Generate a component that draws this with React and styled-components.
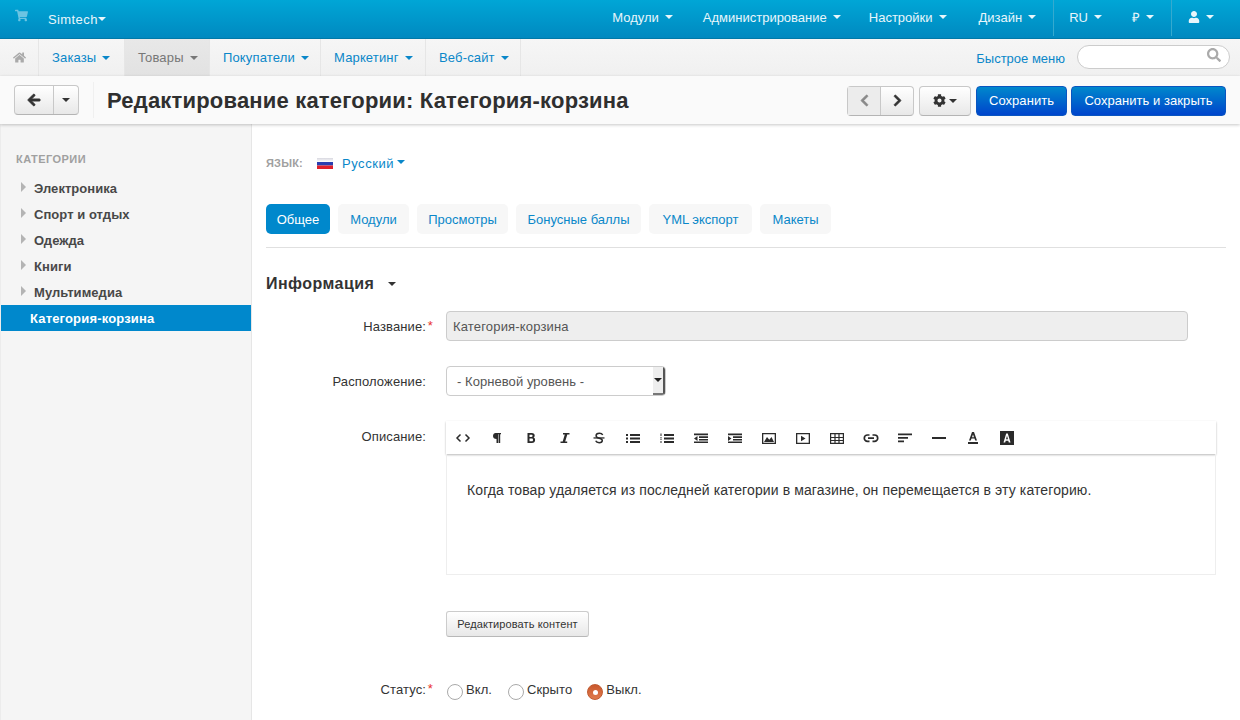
import React from 'react';
import styled, { createGlobalStyle } from 'styled-components';
import { FaShoppingCart, FaHome, FaArrowLeft, FaChevronLeft, FaChevronRight, FaCog, FaUser, FaSearch } from 'react-icons/fa';

const GlobalStyle = createGlobalStyle`
  html, body {
    margin: 0;
    padding: 0;
    height: 100%;
    overflow: hidden;
    background: #fff;
    font-family: "Liberation Sans", Arial, sans-serif;
    font-size: 13px;
    color: #333;
  }
  * { box-sizing: border-box; }
`;

const Page = styled.div`
  display: flex;
  flex-direction: column;
  height: 720px;
  overflow: hidden;
`;

const TopBar = styled.div`
  display: flex;
  align-items: stretch;
  height: 39px;
  flex: none;
  background: linear-gradient(to bottom, #00a6d6, #0089c0);
  border-bottom: 1px solid #0079a8;
  color: #fff;
`;

const CartIcon = styled.div`
  display: flex;
  width: 48px;
  padding: 9px 0 0 15px;
  color: #6cc4e2;
  font-size: 13px;
`;

const Brand = styled.div`
  display: flex;
  align-items: center;
  color: #e8f6fb;
  letter-spacing: 0.4px;
`;

const Caret = styled.span`
  display: inline-block;
  flex: none;
  width: 0;
  height: 0;
  margin-left: ${(p) => p.$gap ?? 6}px;
  margin-bottom: ${(p) => p.$up ?? 0}px;
  border-left: 4px solid transparent;
  border-right: 4px solid transparent;
  border-top: 4px solid ${(p) => p.$color || 'currentColor'};
`;

const TopRight = styled.div`
  display: flex;
  margin-left: auto;
  padding-right: 10px;
`;

const TopGroup = styled.div`
  display: flex;
  padding: ${(p) => p.$pad || '0'};
  border-left: ${(p) => (p.$line ? '1px solid #35aacf' : 'none')};
  margin-bottom: 2px;
`;

const TopItem = styled.div`
  display: flex;
  align-items: center;
  margin-left: ${(p) => p.$ml ?? 0}px;
  color: #e8f6fb;
  padding-bottom: 2px;
`;

const SubNav = styled.div`
  display: flex;
  height: 37px;
  flex: none;
  background: linear-gradient(to bottom, #f6f6f6, #f0f0f0);
  letter-spacing: 0.15px;
`;

const SubCell = styled.div`
  display: flex;
  align-items: center;
  width: ${(p) => p.$w}px;
  padding-left: ${(p) => p.$pl ?? 13}px;
  border-right: 1px solid #e6e6e6;
  background: ${(p) => (p.$active ? 'linear-gradient(to bottom, #e8e8e8, #e2e2e2)' : 'none')};
  color: ${(p) => (p.$active ? '#777' : '#0a87c9')};
`;

const HomeCell = styled(SubCell)`
  color: #aaa;
`;

const QuickArea = styled.div`
  display: flex;
  align-items: center;
  margin-left: auto;
  padding-right: 10px;
`;

const QuickLink = styled.span`
  color: #0a87c9;
  margin-top: 1px;
  letter-spacing: 0;
`;

const SearchBox = styled.div`
  display: flex;
  justify-content: flex-end;
  width: 153px;
  height: 24px;
  margin: 0 0 1px 12px;
  padding: 2px 8px;
  background: #fff;
  border: 1px solid #ccc;
  border-radius: 12px;
  color: #aaa;
  font-size: 14px;
`;

const ActionBar = styled.div`
  position: relative;
  z-index: 2;
  display: flex;
  align-items: center;
  height: 48px;
  flex: none;
  padding: 0 14px;
  background: #fafafa;
  box-shadow: 0 1px 3px rgba(0, 0, 0, 0.22);
`;

const BtnGroup = styled.div`
  display: flex;
  height: 30px;
  margin-top: ${(p) => p.$mt ?? 0}px;
  margin-left: ${(p) => p.$ml ?? 0}px;
  border: 1px solid #c8c8c8;
  border-bottom-color: #b4b4b4;
  border-radius: 4px;
  background: linear-gradient(to bottom, #fff, #e8e8e8);
`;

const GroupBtn = styled.div`
  display: flex;
  align-items: center;
  justify-content: center;
  width: ${(p) => p.$w}px;
  border-left: ${(p) => (p.$split ? '1px solid #c8c8c8' : 'none')};
  background: ${(p) => (p.$off ? '#ececec' : 'none')};
  color: ${(p) => (p.$off ? '#888' : '#333')};
  font-size: 14px;
`;

const Divider = styled.div`
  width: 1px;
  height: 36px;
  margin: 0 13px 0 14px;
  background: #f0f0f0;
`;

const Title = styled.h1`
  margin: 2px auto 0 0;
  font-size: 22px;
  font-weight: bold;
  letter-spacing: 0.19px;
  color: #2f2f2f;
`;

const SaveBtn = styled.div`
  display: flex;
  align-items: center;
  justify-content: center;
  width: ${(p) => p.$w}px;
  height: 30px;
  margin-left: ${(p) => p.$ml}px;
  margin-top: 1px;
  border: 1px solid #0a55c0;
  border-radius: 4px;
  background: linear-gradient(to bottom, #0088cc, #0044cc);
  color: #fff;
  letter-spacing: 0.05px;
`;

const Body = styled.div`
  display: flex;
  flex: 1;
  min-height: 0;
`;

const Sidebar = styled.aside`
  width: 252px;
  flex: none;
  padding-top: 29px;
  background: #f5f5f5;
  border-left: 1px solid #ececec;
  border-right: 1px solid #e6e6e6;
`;

const SideTitle = styled.div`
  margin: 0 0 9px 15px;
  font-size: 11px;
  font-weight: bold;
  line-height: 13px;
  letter-spacing: 0.45px;
  color: #a0a0a0;
`;

const SideItem = styled.div`
  display: flex;
  align-items: center;
  height: 26px;
  padding-left: ${(p) => (p.$active ? 29 : 20)}px;
  background: ${(p) => (p.$active ? '#0088cc' : 'none')};
  color: ${(p) => (p.$active ? '#fff' : '#484848')};
  font-weight: bold;
  letter-spacing: ${(p) => (p.$active ? 0.17 : 0.05)}px;
`;

const SideArrow = styled.span`
  width: 0;
  height: 0;
  margin-right: 8px;
  margin-bottom: 2px;
  border-top: 5px solid transparent;
  border-bottom: 5px solid transparent;
  border-left: 5px solid #b4b4b4;
`;

const Main = styled.main`
  flex: 1;
  min-width: 0;
  padding: 0 14px;
`;

const LangRow = styled.div`
  display: flex;
  align-items: center;
  height: 20px;
  margin-top: 29px;
`;

const LangLabel = styled.span`
  width: 51px;
  font-size: 11px;
  font-weight: bold;
  letter-spacing: 0.2px;
  color: #a0a0a0;
`;

const LangLink = styled.span`
  display: flex;
  align-items: center;
  margin-left: 9px;
  color: #0a87c9;
  letter-spacing: 0.55px;
`;

const Tabs = styled.div`
  display: flex;
  gap: 8px;
  margin-top: 31px;
  padding-bottom: 13px;
  border-bottom: 1px solid #e0e0e0;
`;

const Tab = styled.div`
  display: flex;
  align-items: center;
  justify-content: center;
  width: ${(p) => p.$w}px;
  height: 30px;
  border-radius: 5px;
  background: ${(p) => (p.$active ? '#0088cc' : '#f7f7f7')};
  color: ${(p) => (p.$active ? '#fff' : '#0a87c9')};
`;

const SectionHead = styled.div`
  display: flex;
  align-items: center;
  height: 20px;
  margin-top: 26px;
  font-size: 16px;
  font-weight: bold;
  letter-spacing: 0.45px;
  color: #333;
`;

const Row = styled.div`
  display: flex;
  align-items: ${(p) => p.$align || 'center'};
  margin-top: ${(p) => p.$mt}px;
`;

const Label = styled.div`
  width: 180px;
  padding-right: 20px;
  flex: none;
  text-align: right;
  position: relative;
  padding-top: ${(p) => p.$pt ?? 0}px;
  letter-spacing: 0.12px;
`;

const Star = styled.span`
  position: absolute;
  right: 13px;
  top: ${(p) => p.$top ?? -1}px;
  color: #e9322d;
`;

const ReadInput = styled.div`
  display: flex;
  align-items: center;
  width: 742px;
  height: 30px;
  padding: 0 6px;
  background: #eee;
  border: 1px solid #ccc;
  border-radius: 4px;
  color: #555;
  letter-spacing: 0.17px;
`;

const Select = styled.div`
  display: flex;
  align-items: center;
  justify-content: space-between;
  width: 220px;
  height: 30px;
  padding-left: 10px;
  background: #fff;
  border: 1px solid #ccc;
  border-radius: 4px;
  color: #555;
  letter-spacing: 0.06px;
  overflow: hidden;
`;

const SelectArrow = styled.span`
  display: flex;
  align-items: center;
  justify-content: center;
  width: 12px;
  height: 100%;
  background: #eeeeee;
  border-right: 2px solid #555;
  border-bottom: 2px solid #777;
`;

const Editor = styled.div`
  width: 770px;
`;

const EditorBar = styled.div`
  display: flex;
  height: 33px;
  background: #fff;
  box-shadow: 0 1px 2px rgba(0, 0, 0, 0.28);
`;

const EditorBtn = styled.div`
  display: flex;
  align-items: center;
  justify-content: center;
  width: 34px;
  color: #2b2b2b;
`;

const EditorText = styled.div`
  height: 121px;
  padding: 28px 20px 0;
  border: 1px solid #eee;
  border-top: none;
  font-size: 14px;
  line-height: 17px;
  letter-spacing: 0.11px;
  color: #333;
`;

const SmallBtn = styled.div`
  display: flex;
  align-items: center;
  justify-content: center;
  width: 143px;
  height: 26px;
  margin-left: 180px;
  margin-top: 36px;
  border: 1px solid #ccc;
  border-bottom-color: #b8b8b8;
  border-radius: 3px;
  background: linear-gradient(to bottom, #fff, #e8e8e8);
  font-size: 11px;
  letter-spacing: 0.1px;
  color: #333;
`;

const Radio = styled.div`
  display: flex;
  align-items: center;
  margin-right: ${(p) => p.$mr ?? 15}px;
  letter-spacing: 0.08px;
`;

const RadioDot = styled.span`
  display: flex;
  align-items: center;
  justify-content: center;
  width: 16px;
  height: 16px;
  margin: 5px 3px 0 1px;
  border-radius: 50%;
  background: ${(p) => (p.$on ? 'linear-gradient(to bottom, #c9572c, #e07b4e)' : '#fff')};
  border: ${(p) => (p.$on ? '1px solid #c05a30' : '1.5px solid #aaa')};
  &::after {
    content: '';
    display: ${(p) => (p.$on ? 'block' : 'none')};
    width: 5px;
    height: 5px;
    border-radius: 50%;
    background: #fff;
  }
`;

const StatusRow = styled(Row)`
  line-height: 15px;
`;

const Flag = () => (
  <svg width="16" height="11" viewBox="0 0 16 11">
    <defs>
      <linearGradient id="flagWhite" x1="0" y1="0" x2="0" y2="1">
        <stop offset="0" stopColor="#d8d8e0" />
        <stop offset="1" stopColor="#ffffff" />
      </linearGradient>
    </defs>
    <rect width="16" height="4" fill="url(#flagWhite)" />
    <rect y="4" width="16" height="3.500" fill="#2a3fb0" />
    <rect y="7.500" width="16" height="3.500" fill="#e0202a" />
  </svg>
);

const Ico = ({ children }) => (
  <svg width="16" height="14" viewBox="0 0 16 14" fill="#2b2b2b">{children}</svg>
);

// toolbar drawings of the wysiwyg editor
const editorIcons = [
  <Ico key="code"><path d="M5.500 3.500 2 7l3.500 3.500M10.500 3.500 14 7l-3.500 3.500" fill="none" stroke="#2b2b2b" strokeWidth="1.500" /></Ico>,
  <Ico key="para"><path d="M6.500 2H12v1.300h-.8V12H9.600V3.300h-.5V12H7.500V8C5.300 8 4 6.800 4 5s1.300-3 2.500-3z" /></Ico>,
  <Ico key="bold"><path fillRule="evenodd" d="M4.500 2h4.300c1.900 0 2.900 1 2.900 2.500 0 1-.5 1.700-1.200 2.100 1 .3 1.600 1.200 1.600 2.400 0 1.800-1.200 3-3.200 3H4.500zm2 1.700v2.300h1.900c.8 0 1.200-.5 1.200-1.200s-.4-1.100-1.200-1.100zm0 3.900v2.700h2.200c.9 0 1.300-.6 1.300-1.400s-.5-1.300-1.300-1.300z" /></Ico>,
  <Ico key="italic"><path d="M6 2h6.500v1.500h-2.200L8.200 10.500h2V12H3.500v-1.500h2.200l2.100-7H6z" /></Ico>,
  <Ico key="strike"><path d="M11.700 4C11.200 2.900 10 2.300 8.400 2.300 6.400 2.300 5.100 3.300 5.100 4.700c0 1.500 1.300 2.100 3.200 2.500 1.900.4 3 1 3 2.300 0 1.300-1.300 2.200-3.100 2.200-1.700 0-3-.7-3.500-1.900" fill="none" stroke="#2b2b2b" strokeWidth="1.500" /><path d="M2.500 6.300h11v1.300h-11z" /></Ico>,
  <Ico key="ul"><path d="M1 3h2v2H1zM1 6.500h2v2H1zM1 10h2v2H1zM5 3h10v2H5zM5 6.500h10v2H5zM5 10h10v2H5z" /></Ico>,
  <Ico key="ol"><path d="M1.500 2.500h1v2.500h-1zM1 6.500h2v.8H1zM1 8h2v.6H1zM1 10h2v.6H1zM1 11.400h2v.6H1zM5 3h10v2H5zM5 6.500h10v2H5zM5 10h10v2H5z" /></Ico>,
  <Ico key="outdent"><path d="M1 2.500h14v1.700H1zM6 5.300h9V7H6zM6 7.900h9v1.700H6zM1 10.500h14V12H1zM4.500 5v5L1 7.500z" /></Ico>,
  <Ico key="indent"><path d="M1 2.500h14v1.700H1zM6 5.300h9V7H6zM6 7.900h9v1.700H6zM1 10.500h14V12H1zM1 5v5l3.500-2.500z" /></Ico>,
  <Ico key="image"><path d="M1 2h14v11H1zm1.300 1.300v8.400h11.400V3.300z" fillRule="evenodd" /><path d="M3 11 6 6l2.300 2.700L10.500 6 13 11z" /></Ico>,
  <Ico key="video"><path d="M1 2h14v11H1zm1.300 1.300v8.400h11.400V3.300z" fillRule="evenodd" /><path d="M6 4.800v5.400l4.500-2.700z" /></Ico>,
  <Ico key="table"><path d="M1 2h14v11H1zm1.200 1.200V6h3.200V3.200zm4.400 0V6h2.800V3.200zm4 0V6h3.200V3.200zM2.200 7.100v1.900h3.200V7.100zm4.400 0v1.900h2.800V7.100zm4 0v1.900h3.200V7.100zM2.200 10.100v1.700h3.200v-1.700zm4.400 0v1.700h2.800v-1.700zm4 0v1.700h3.200v-1.700z" fillRule="evenodd" /></Ico>,
  <Ico key="link"><path d="M6.500 4H4.500a3.200 3.200 0 0 0 0 6.400h2M9.500 4h2a3.200 3.200 0 0 1 0 6.400h-2M5 7.200h6" fill="none" stroke="#2b2b2b" strokeWidth="1.700" /></Ico>,
  <Ico key="align"><path d="M1 2.500h14v1.800H1zM1 6h10v1.800H1zM1 9.500h6v1.800H1z" /></Ico>,
  <Ico key="line"><path d="M1 6h14v2H1z" /></Ico>,
  <Ico key="color"><path d="M7 1h2l3 8.500h-1.800L9.500 7.600h-3l-.7 1.900H4zm1 2.400L7 6.300h2zM3 11h10v2H3z" fillRule="evenodd" /></Ico>,
  <Ico key="bg"><path fillRule="evenodd" d="M1 0h14v14H1zm6.200 2.500L4.500 11.500h1.700l.5-1.800h2.600l.5 1.800h1.700L8.800 2.500zM8 4.800l1 3.400H7z" /></Ico>,
];

const TOP_MENU = [
  ['Модули', 0],
  ['Администрирование', 30],
  ['Настройки', 28],
  ['Дизайн', 32],
];

const SUB_MENU = [
  ['Заказы', 86],
  ['Товары', 85, true],
  ['Покупатели', 111],
  ['Маркетинг', 105],
  ['Веб-сайт', 95],
];

const CATEGORIES = ['Электроника', 'Спорт и отдых', 'Одежда', 'Книги', 'Мультимедиа'];

const TABS = [
  ['Общее', 64],
  ['Модули', 71],
  ['Просмотры', 91],
  ['Бонусные баллы', 125],
  ['YML экспорт', 103],
  ['Макеты', 71],
];

const App = () => (
  <Page>
    <GlobalStyle />
    <TopBar>
      <CartIcon><FaShoppingCart /></CartIcon>
      <Brand>Simtech<Caret $gap={0} /></Brand>
      <TopRight>
        <TopGroup $pad="0 17px 0 0">
          {TOP_MENU.map(([name, ml]) => (
            <TopItem key={name} $ml={ml}>{name}<Caret /></TopItem>
          ))}
        </TopGroup>
        <TopGroup $line $pad="0 17px 0 15px">
          <TopItem>RU<Caret /></TopItem>
          <TopItem $ml={30}>₽<Caret /></TopItem>
        </TopGroup>
        <TopGroup $line $pad="0 16px 0 16px">
          <TopItem><FaUser size={12} /><Caret /></TopItem>
        </TopGroup>
      </TopRight>
    </TopBar>

    <SubNav>
      <HomeCell $w={39} $pl={13}><FaHome size={13} /></HomeCell>
      {SUB_MENU.map(([name, w, active]) => (
        <SubCell key={name} $w={w} $active={active}>
          {name}<Caret />
        </SubCell>
      ))}
      <QuickArea>
        <QuickLink>Быстрое меню</QuickLink>
        <SearchBox><FaSearch /></SearchBox>
      </QuickArea>
    </SubNav>

    <ActionBar>
      <BtnGroup>
        <GroupBtn $w={38}><FaArrowLeft size={14} stroke="currentColor" strokeWidth={30} /></GroupBtn>
        <GroupBtn $w={25} $split><Caret $gap={0} /></GroupBtn>
      </BtnGroup>
      <Divider />
      <Title>Редактирование категории: Категория-корзина</Title>
      <BtnGroup $mt={1}>
        <GroupBtn $w={32} $off><FaChevronLeft size={13} stroke="currentColor" strokeWidth={30} /></GroupBtn>
        <GroupBtn $w={33} $split><FaChevronRight size={13} stroke="currentColor" strokeWidth={30} /></GroupBtn>
      </BtnGroup>
      <BtnGroup $mt={1} $ml={5}>
        <GroupBtn $w={50}><FaCog size={13} /><Caret $gap={3} /></GroupBtn>
      </BtnGroup>
      <SaveBtn $w={91} $ml={5}>Сохранить</SaveBtn>
      <SaveBtn $w={155} $ml={4}>Сохранить и закрыть</SaveBtn>
    </ActionBar>

    <Body>
      <Sidebar>
        <SideTitle>КАТЕГОРИИ</SideTitle>
        {CATEGORIES.map((name) => (
          <SideItem key={name}><SideArrow />{name}</SideItem>
        ))}
        <SideItem $active>Категория-корзина</SideItem>
      </Sidebar>

      <Main>
        <LangRow>
          <LangLabel>ЯЗЫК:</LangLabel>
          <Flag />
          <LangLink>Русский<Caret $gap={3} $up={3} /></LangLink>
        </LangRow>

        <Tabs>
          {TABS.map(([name, w], i) => (
            <Tab key={name} $w={w} $active={i === 0}>{name}</Tab>
          ))}
        </Tabs>

        <SectionHead>Информация<Caret $gap={14} /></SectionHead>

        <Row $mt={17}>
          <Label>Название:<Star>*</Star></Label>
          <ReadInput>Категория-корзина</ReadInput>
        </Row>

        <Row $mt={25}>
          <Label>Расположение:</Label>
          <Select>
            - Корневой уровень -
            <SelectArrow><Caret $gap={0} $color="#222" /></SelectArrow>
          </Select>
        </Row>

        <Row $mt={25} $align="flex-start">
          <Label $pt={8}>Описание:</Label>
          <Editor>
            <EditorBar>
              {editorIcons.map((icon) => (
                <EditorBtn key={icon.key}>{icon}</EditorBtn>
              ))}
            </EditorBar>
            <EditorText>Когда товар удаляется из последней категории в магазине, он перемещается в эту категорию.</EditorText>
          </Editor>
        </Row>

        <SmallBtn>Редактировать контент</SmallBtn>

        <StatusRow $mt={42}>
          <Label>Статус:<Star>*</Star></Label>
          <Radio><RadioDot />Вкл.</Radio>
          <Radio $mr={14}><RadioDot />Скрыто</Radio>
          <Radio><RadioDot $on />Выкл.</Radio>
        </StatusRow>
      </Main>
    </Body>
  </Page>
);

export default App;
